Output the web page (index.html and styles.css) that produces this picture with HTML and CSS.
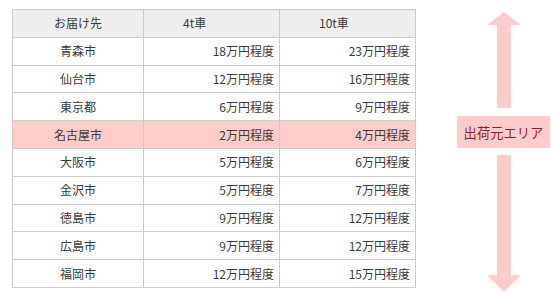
FILE: index.html
```html
<!DOCTYPE html>
<html lang="ja">
<head>
<meta charset="utf-8">
<link rel="stylesheet" href="styles.css">
</head>
<body>
<div class="page">
  <table class="price">
    <thead>
      <tr><th class="c-city">お届け先</th><th class="c-val">4t車</th><th class="c-val">10t車</th></tr>
    </thead>
    <tbody>
      <tr><td class="c-city">青森市</td><td class="c-num">18万円程度</td><td class="c-num">23万円程度</td></tr>
      <tr><td class="c-city">仙台市</td><td class="c-num">12万円程度</td><td class="c-num">16万円程度</td></tr>
      <tr><td class="c-city">東京都</td><td class="c-num">6万円程度</td><td class="c-num">9万円程度</td></tr>
      <tr class="hl"><td class="c-city">名古屋市</td><td class="c-num">2万円程度</td><td class="c-num">4万円程度</td></tr>
      <tr><td class="c-city">大阪市</td><td class="c-num">5万円程度</td><td class="c-num">6万円程度</td></tr>
      <tr><td class="c-city">金沢市</td><td class="c-num">5万円程度</td><td class="c-num">7万円程度</td></tr>
      <tr><td class="c-city">徳島市</td><td class="c-num">9万円程度</td><td class="c-num">12万円程度</td></tr>
      <tr><td class="c-city">広島市</td><td class="c-num">9万円程度</td><td class="c-num">12万円程度</td></tr>
      <tr><td class="c-city">福岡市</td><td class="c-num">12万円程度</td><td class="c-num">15万円程度</td></tr>
    </tbody>
  </table>
  <div class="arrow">
    <svg class="head head-up" width="34" height="13" viewBox="0 0 34 13"><polygon points="17,0 34,13 0,13" fill="#ffcccc"/></svg>
    <div class="shaft shaft-top"></div>
    <div class="label">出荷元エリア</div>
    <div class="shaft shaft-bottom"></div>
    <svg class="head head-down" width="34" height="17" viewBox="0 0 34 17"><polygon points="0,0 34,0 17,17" fill="#ffcccc"/></svg>
  </div>
</div>
</body>
</html>
```
FILE: styles.css
```css
html, body {
  margin: 0;
  padding: 0;
  background: #ffffff;
}
body {
  font-family: "Noto Sans CJK JP", "Noto Sans", sans-serif;
  color: #3a3a3a;
  font-size: 12px;
}
.page {
  display: flex;
  align-items: flex-start;
  padding: 9px 0 0 12px;
}
.price {
  border-collapse: collapse;
  width: 404px;
  table-layout: fixed;
}
.price th,
.price td {
  border: 1px solid #cccccc;
  height: 27.8px;
  padding: 0 6px;
  font-weight: normal;
  line-height: 1;
  box-sizing: border-box;
}
.price th {
  background: #efefef;
}
.price th.c-city { width: 131px; text-align: center; }
.price th.c-val { text-align: left; padding-left: 39px; }
.price td.c-city { text-align: center; }
.price td.c-num { text-align: right; padding-right: 5px; }
.price tr.hl td { background: #ffcccc; }

.arrow {
  margin-left: 41px;
  margin-top: 3px;
  width: 93px;
  height: 280px;
  display: flex;
  flex-direction: column;
  align-items: center;
}
.head { display: block; flex: none; }
.shaft {
  width: 14px;
  background: #ffcccc;
}
.shaft-top { height: 83px; flex: none; }
.shaft-bottom { flex: 1; }
.label {
  margin: 8px 0 7px;
  width: 93px;
  height: 32px;
  background: #ffcccc;
  color: #9a1c1c;
  font-size: 13.3px;
  display: flex;
  align-items: center;
  justify-content: center;
  flex: none;
}
```
